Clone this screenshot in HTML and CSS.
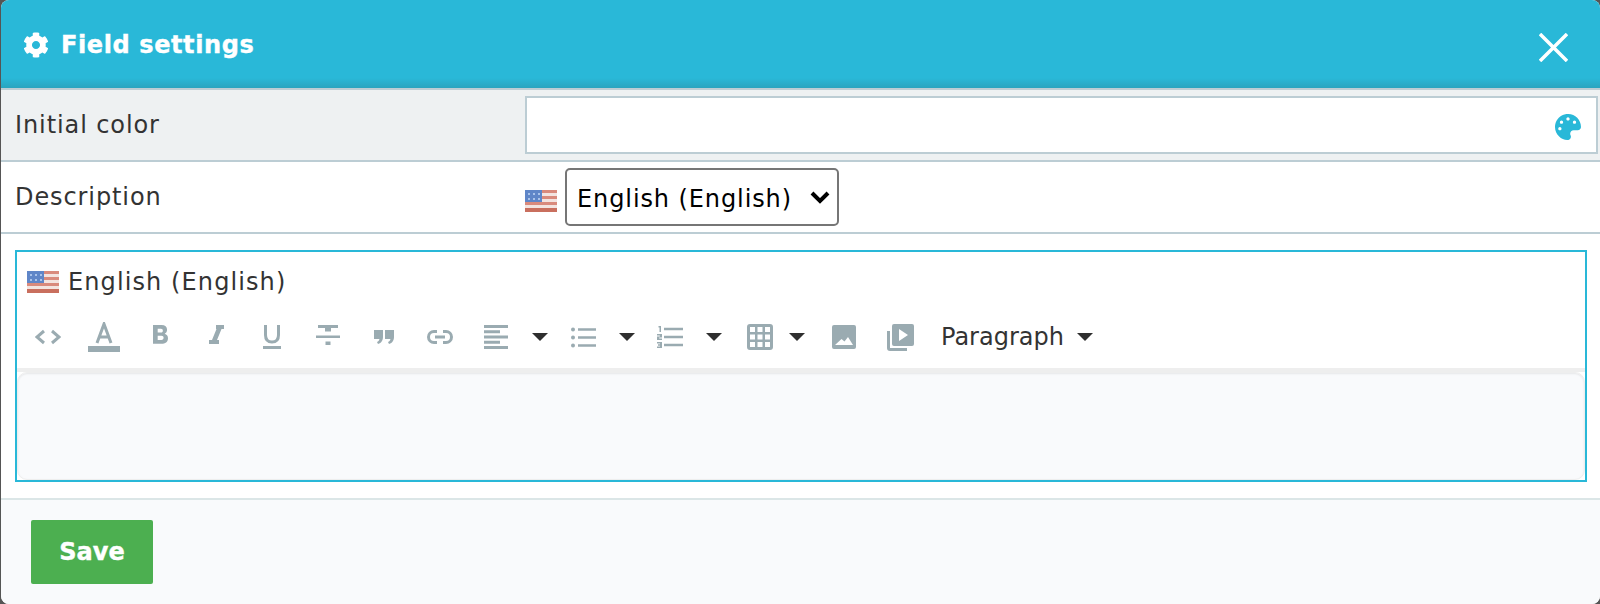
FILE: index.html
```html
<!DOCTYPE html>
<html lang="en">
<head>
    <meta charset="UTF-8">
    <title>Field settings</title>
    <link rel="stylesheet" href="styles.css">
</head>
<body>

<svg class="defs">
    <defs>
        <symbol id="flag" viewBox="0 0 32 22">
            <rect width="32" height="22" fill="#f3e4e0"/>
            <rect y="0" width="32" height="3" fill="#d98a7c"/>
            <rect y="6" width="32" height="3" fill="#d98a7c"/>
            <rect y="12" width="32" height="3" fill="#d98a7c"/>
            <rect y="18" width="32" height="4" fill="#c96f5e"/>
            <rect width="17" height="12" fill="#5f86c8"/>
            <path d="M3 3h2v2H3zM8 3h2v2H8zM13 3h2v2h-2zM3 8h2v2H3zM8 8h2v2H8zM13 8h2v2h-2z" fill="#a9c3ea"/>
        </symbol>
        <symbol id="caret" viewBox="0 0 16 8">
            <path d="M0 0h16L8 8z" fill="#2f2f2f"/>
        </symbol>
    </defs>
</svg>

<div class="modal">
    <div class="modal-header">
        <h2 class="modal-title">
            <svg class="title-icon" viewBox="0 0 512 512"><path fill="#fff" d="M487.4 315.7l-42.6-24.6c4.3-23.2 4.3-47 0-70.2l42.6-24.6c4.9-2.8 7.1-8.6 5.5-14-11.1-35.6-30-67.8-54.7-94.6-3.8-4.1-10-5.1-14.8-2.3L380.8 110c-17.9-15.4-38.5-27.3-60.8-35.1V25.8c0-5.6-3.9-10.5-9.4-11.7-36.7-8.2-74.3-7.8-109.2 0-5.5 1.2-9.4 6.1-9.4 11.7V75c-22.2 7.9-42.8 19.8-60.8 35.1L88.7 85.5c-4.9-2.8-11-1.9-14.8 2.3-24.7 26.7-43.6 58.9-54.7 94.6-1.7 5.4.6 11.2 5.5 14L67.3 221c-4.3 23.2-4.3 47 0 70.2l-42.6 24.6c-4.9 2.8-7.1 8.6-5.5 14 11.1 35.6 30 67.8 54.7 94.6 3.8 4.1 10 5.1 14.8 2.3l42.6-24.6c17.9 15.4 38.5 27.3 60.8 35.1v49.2c0 5.6 3.9 10.5 9.4 11.7 36.7 8.2 74.3 7.8 109.2 0 5.5-1.2 9.4-6.1 9.4-11.7v-49.2c22.2-7.9 42.8-19.8 60.8-35.1l42.6 24.6c4.9 2.8 11 1.9 14.8-2.3 24.7-26.7 43.6-58.9 54.7-94.6 1.5-5.5-.7-11.3-5.6-14.1zM256 336c-44.1 0-80-35.9-80-80s35.9-80 80-80 80 35.9 80 80-35.9 80-80 80z"/></svg>
            Field settings
        </h2>
        <button class="close-btn" aria-label="Close">
            <svg viewBox="0 0 29 29"><path d="M1 1l27 27M28 1L1 28" stroke="#fff" stroke-width="3.5" fill="none"/></svg>
        </button>
    </div>

    <div class="row row-shaded">
        <label class="row-label" for="initialColor">Initial color</label>
        <div class="color-field">
            <input class="color-input" id="initialColor" type="text">
            <svg class="palette-icon" viewBox="0 0 512 512"><path fill="#29b8d8" d="M204.3 5C104.9 24.4 24.8 104.3 5.2 203.4c-37 187 131.7 326.4 258.8 306.7 41.2-6.4 61.4-54.6 42.5-91.7-23.1-45.4 9.9-98.4 60.9-98.4h79.7c35.8 0 64.8-29.6 64.9-65.3C511.5 97.1 368.1-26.9 204.3 5zM96 320c-17.7 0-32-14.3-32-32s14.3-32 32-32 32 14.3 32 32-14.3 32-32 32zm32-128c-17.7 0-32-14.3-32-32s14.3-32 32-32 32 14.3 32 32-14.3 32-32 32zm128-64c-17.7 0-32-14.3-32-32s14.3-32 32-32 32 14.3 32 32-14.3 32-32 32zm128 64c-17.7 0-32-14.3-32-32s14.3-32 32-32 32 14.3 32 32-14.3 32-32 32z"/></svg>
        </div>
    </div>

    <div class="row">
        <label class="row-label" for="language">Description</label>
        <div class="lang-field">
            <svg class="flag flag-low"><use href="#flag"/></svg>
            <select class="lang-select" id="language">
                <option>English (English)</option>
            </select>
        </div>
    </div>

    <div class="editor-wrap">
        <div class="editor">
            <div class="editor-lang">
                <svg class="flag"><use href="#flag"/></svg>
                <span>English (English)</span>
            </div>
            <div class="toolbar">
                <span class="tool"><svg width="26" height="16" viewBox="0 0 26 16"><path d="M9 2L2 8l7 6M17 2l7 6-7 6" class="line"/></svg></span>
                <span class="tool"><svg width="32" height="30" viewBox="0 0 32 30"><path d="M9 21L16 2l7 19M11.5 15h9" class="line"/><rect y="24" width="32" height="6" class="fill"/></svg></span>
                <span class="tool"><svg width="15" height="24" viewBox="0 0 16 25.6"><path fill-rule="evenodd" class="fill" d="M0 0h9c4 0 6 2 6 5 0 2-1 3.500-2.500 4.300C14.500 10 16 11.500 16 14c0 4-3 6-7 6H0zM5 4v4h3.500c1.300 0 2-.8 2-2s-.7-2-2-2zM5 11.500V16h4c1.500 0 2.300-1 2.300-2.300S10.500 11.500 9 11.500z"/></svg></span>
                <span class="tool"><svg width="15" height="24" viewBox="0 0 15 24"><path class="fill" d="M7 0h8v4h-2.500L8 15h2v4H0v-4h3L7.500 4H7z"/></svg></span>
                <span class="tool"><svg width="18" height="24" viewBox="0 0 18 24"><path d="M2.500 0v10c0 4.500 2.500 7 6.500 7s6.500-2.500 6.500-7V0" class="line"/><rect y="21" width="18" height="3" class="fill"/></svg></span>
                <span class="tool"><svg width="24" height="24" viewBox="0 0 24 24"><path class="fill" d="M2 0h20v3h-7v3.500H9V3H2zM0 10.500h24V13H0zM9.500 16.500h5V20h-5z"/></svg></span>
                <span class="tool"><svg width="20" height="14" viewBox="0 0 20 14"><path class="fill" d="M0 0h9v7c0 3-1.500 6-5 7l-1-2c1.500-.6 2.300-1.500 2.400-3H0zM11 0h9v7c0 3-1.500 6-5 7l-1-2c1.500-.6 2.300-1.500 2.400-3H11z"/></svg></span>
                <span class="tool"><svg width="26" height="14" viewBox="0 0 26 14"><path d="M10 1.500H7a5.500 5.500 0 000 11h3M16 1.500h3a5.500 5.500 0 010 11h-3M8 7h10" class="line"/></svg></span>
                <span class="tool"><svg width="24" height="24" viewBox="0 0 24 24"><path class="fill" d="M0 0h24v3H0zM0 5.250h16v3H0zM0 10.500h24v3H0zM0 15.750h16v3H0zM0 21h24v3H0z"/></svg></span>
                <span class="tool-caret"><svg class="caret"><use href="#caret"/></svg></span>
                <span class="tool"><svg width="25" height="21" viewBox="0 0 25 21"><circle cx="2" cy="2.500" r="2" class="fill"/><circle cx="2" cy="10.500" r="2" class="fill"/><circle cx="2" cy="18.500" r="2" class="fill"/><path class="fill" d="M7 1.250h18v2.500H7zM7 9.250h18v2.500H7zM7 17.250h18v2.500H7z"/></svg></span>
                <span class="tool-caret"><svg class="caret"><use href="#caret"/></svg></span>
                <span class="tool"><svg width="26" height="22" viewBox="0 0 26 22"><path class="fill" d="M1.500 0H4v6H2.500V1.500h-1zM0 8h5v3.500H2.200v1H5V14H0v-3.500h2.800v-1H0zM0 16h5v6H0v-1.500h3v-.8H1v-1.400h2v-.8H0zM7 1.750h19v2.500H7zM7 9.750h19v2.500H7zM7 17.750h19v2.500H7z"/></svg></span>
                <span class="tool-caret"><svg class="caret"><use href="#caret"/></svg></span>
                <span class="tool tool-table"><svg width="26" height="26" viewBox="0 0 26 26"><path fill-rule="evenodd" class="fill" d="M3 0h20a3 3 0 013 3v20a3 3 0 01-3 3H3a3 3 0 01-3-3V3a3 3 0 013-3zM3 3v5h5V3zM10.500 3v5h5V3zM18 3v5h5V3zM3 10.500v5h5v-5zM10.500 10.500v5h5v-5zM18 10.500v5h5v-5zM3 18v5h5v-5zM10.500 18v5h5v-5zM18 18v5h5v-5z"/></svg></span>
                <span class="tool-caret tool-caret-small"><svg class="caret"><use href="#caret"/></svg></span>
                <span class="tool tool-image"><svg width="24" height="24" viewBox="0 0 24 24"><path fill-rule="evenodd" class="fill" d="M2 0h20a2 2 0 012 2v20a2 2 0 01-2 2H2a2 2 0 01-2-2V2a2 2 0 012-2zM3 20h18l-5-8-3.500 4.500L9.500 14z"/></svg></span>
                <span class="tool"><svg width="27" height="27" viewBox="0 0 27 27"><path class="fill" d="M0 7h3v17h17v3H3a3 3 0 01-3-3z"/><path fill-rule="evenodd" class="fill" d="M7 0h18a2 2 0 012 2v18a2 2 0 01-2 2H7a2 2 0 01-2-2V2a2 2 0 012-2zM12 5v12l9-6z"/></svg></span>
                <span class="tool-format">Paragraph<svg class="caret"><use href="#caret"/></svg></span>
            </div>
            <div class="editor-area"></div>
        </div>
    </div>

    <div class="modal-footer">
        <button class="save-btn">Save</button>
    </div>
</div>

</body>
</html>
```

FILE: styles.css
```css
html, body {
    margin: 0;
    padding: 0;
    height: 100%;
}

body {
    background-color: #555;
    font-family: 'DejaVu Sans', Verdana, sans-serif;
    color: #333;
    overflow: hidden;
}

.defs {
    display: none;
}

.modal {
    margin-left: 1px;
    height: 604px;
    background-color: #fff;
    border-radius: 8px;
    overflow: hidden;
    display: flex;
    flex-direction: column;
}

.modal-header {
    height: 88px;
    flex: none;
    box-sizing: border-box;
    background: linear-gradient(to bottom, #29b8d8 0, #29b8d8 78px, #2aa4bf 88px);
    display: flex;
    align-items: center;
    justify-content: space-between;
    padding: 0 32px 0 22px;
}

.modal-title {
    margin: 1px 0 0 0;
    font-size: 24px;
    font-weight: bold;
    letter-spacing: 0.6px;
    -webkit-text-stroke: 0.4px #fff;
    color: #fff;
    display: flex;
    align-items: center;
    gap: 12px;
}

.title-icon {
    width: 26px;
    height: 26px;
}

.close-btn {
    background: none;
    border: 0;
    padding: 0;
    width: 29px;
    height: 29px;
    margin-top: 7px;
}

.close-btn svg {
    display: block;
    width: 29px;
    height: 29px;
}

.row {
    height: 70px;
    flex: none;
    border-top: 2px solid #bccdd4;
    display: grid;
    grid-template-columns: 524px 1fr;
    align-items: center;
}

.row-shaded {
    background-color: #eef1f2;
}

.row-label {
    padding-left: 14px;
    font-size: 24px;
    letter-spacing: 0.9px;
}

.color-field {
    position: relative;
    margin-right: 2px;
}

.color-input {
    display: block;
    width: 100%;
    height: 58px;
    box-sizing: border-box;
    border: 2px solid #bccdd4;
    background-color: #fff;
}

.palette-icon {
    position: absolute;
    right: 17px;
    top: 18px;
    width: 26px;
    height: 26px;
}

.lang-field {
    display: flex;
    align-items: center;
    gap: 8px;
}

.flag {
    width: 32px;
    height: 22px;
    flex: none;
    filter: blur(0.7px);
}

.flag-low {
    margin-top: 8px;
}

.lang-select {
    appearance: none;
    width: 274px;
    height: 58px;
    box-sizing: border-box;
    border: 2px solid #767676;
    border-radius: 5px;
    padding: 3px 0 0 10px;
    background-color: #fff;
    background-image: url("data:image/svg+xml,%3Csvg xmlns='http://www.w3.org/2000/svg' width='20' height='13' viewBox='0 0 20 13'%3E%3Cpath d='M2 2l8 8 8-8' stroke='%23000' stroke-width='4' fill='none'/%3E%3C/svg%3E");
    background-repeat: no-repeat;
    background-position: right 7px center;
    font-family: inherit;
    font-size: 24px;
    letter-spacing: 0.9px;
    color: #000;
}

.editor-wrap {
    flex: none;
    height: 266px;
    box-sizing: border-box;
    border-top: 2px solid #bccdd4;
    padding: 16px 13px 0 14px;
}

.editor {
    height: 232px;
    box-sizing: border-box;
    border: 2px solid #29b8d8;
    display: flex;
    flex-direction: column;
}

.editor-lang {
    display: flex;
    align-items: center;
    gap: 9px;
    padding: 12px 0 0 10px;
    height: 36px;
    font-size: 24px;
    letter-spacing: 1.1px;
}

.toolbar {
    display: flex;
    align-items: center;
    height: 72px;
    box-sizing: border-box;
    padding: 6px 0 0 3px;
    border-bottom: 4px solid #eee;
}

.line {
    fill: none;
    stroke: #9aabb1;
    stroke-width: 3;
}

.fill {
    fill: #9aabb1;
}

.tool {
    width: 56px;
    flex: none;
    display: flex;
    align-items: center;
    justify-content: center;
}

.tool-caret {
    width: 31px;
    flex: none;
    display: flex;
    justify-content: center;
}

.tool-caret-small {
    width: 18px;
}

.tool-table {
    margin-left: 3px;
}

.tool-image {
    margin-left: 10px;
}

.caret {
    display: block;
    width: 16px;
    height: 8px;
}

.tool-format {
    margin-left: 13px;
    font-size: 24px;
    display: flex;
    align-items: center;
    gap: 13px;
}

.editor-area {
    flex: 1;
    background-color: #f9fafc;
    border-radius: 10px;
    box-shadow: inset 0 1px 2px rgba(0, 0, 0, 0.08);
    border: 1px solid #eee;
}

.modal-footer {
    flex: 1;
    border-top: 2px solid #dbe6e7;
    background-color: #f9fafc;
    padding: 20px 0 0 30px;
}

.save-btn {
    display: block;
    width: 122px;
    height: 64px;
    border: 0;
    border-radius: 2px;
    background-color: #4caf50;
    color: #fff;
    font-family: inherit;
    font-size: 24px;
    font-weight: bold;
    -webkit-text-stroke: 0.4px #fff;
}
```
